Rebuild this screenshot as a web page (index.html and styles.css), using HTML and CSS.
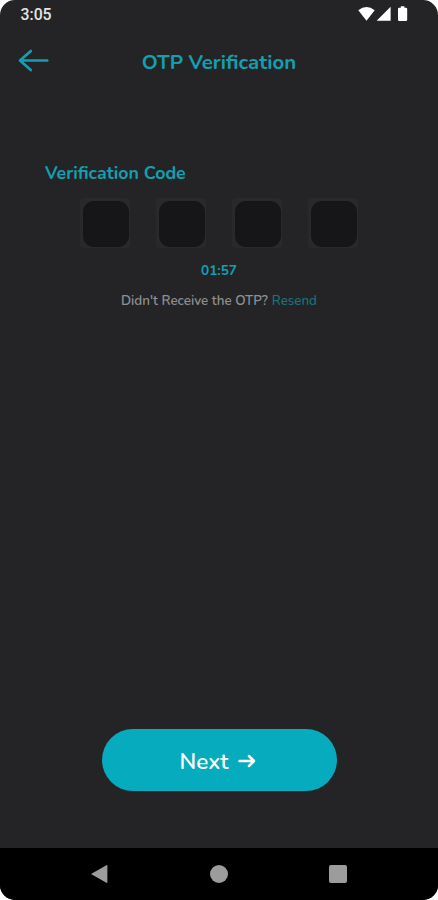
FILE: index.html
```html
<!DOCTYPE html>
<html lang="en">
<head>
    <meta charset="UTF-8">
    <meta name="viewport" content="width=device-width, initial-scale=1.0">
    <title>OTP Verification</title>
    <link rel="stylesheet" href="styles.css">
</head>
<body>
    <div class="screen">
        <div class="status-bar">
            <span class="time">3:05</span>
            <svg class="status-icons" width="52" height="18" viewBox="0 0 52 18" fill="#fff">
                <path d="M0.3 4.2 Q8.5 -2 16.7 4.2 L8.5 14.8 Z"/>
                <path d="M32.6 0.8 V14.8 H18.6 Z"/>
                <path d="M42.8 0.3 h3.6 v1.4 h1.6 q1.2 0 1.2 1.2 v10.9 q0 1.2 -1.2 1.2 h-6.8 q-1.2 0 -1.2 -1.2 v-10.9 q0 -1.2 1.2 -1.2 h1.6 z"/>
            </svg>
        </div>

        <div class="header">
            <button type="button" class="back-button" aria-label="Back">
                <svg width="32" height="24" viewBox="0 0 32 24" fill="none" stroke="#139fb0" stroke-width="2.7" stroke-linecap="round" stroke-linejoin="round">
                    <path d="M29.3 11.5 H2 M12.8 2 L2 11.5 L12.8 21"/>
                </svg>
            </button>
            <h1>OTP Verification</h1>
        </div>

        <form class="otp-form" onsubmit="event.preventDefault()">
            <h2>Verification Code</h2>
            <div class="code-container">
                <div class="code-box"><input type="text" maxlength="1" aria-label="Digit 1"></div>
                <div class="code-box"><input type="text" maxlength="1" aria-label="Digit 2"></div>
                <div class="code-box"><input type="text" maxlength="1" aria-label="Digit 3"></div>
                <div class="code-box"><input type="text" maxlength="1" aria-label="Digit 4"></div>
            </div>
            <div class="timer">01:57</div>
            <div class="resend-row">
                <span class="question">Didn't Receive the OTP?</span>
                <a class="resend">Resend</a>
            </div>
            <button type="submit" class="next-button">
                <span>Next</span>
                <svg width="18" height="14" viewBox="0 0 18 14" fill="none" stroke="#fff" stroke-width="2.5" stroke-linecap="round" stroke-linejoin="round">
                    <path d="M1.5 7 H15.5 M11 2 L16 7 L11 12"/>
                </svg>
            </button>
        </form>

        <div class="nav-bar">
            <svg width="18" height="20" viewBox="0 0 18 20" fill="#9c9c9c">
                <path d="M1 10 L16.4 1.2 Q17.4 0.8 17.4 1.8 V18.2 Q17.4 19.2 16.4 18.8 Z"/>
            </svg>
            <div class="nav-home"></div>
            <div class="nav-recent"></div>
        </div>
    </div>
</body>
</html>
```
FILE: styles.css
```css
body {
    font-family: 'Nunito', 'Lato', sans-serif;
    background-color: #fff;
    margin: 0;
}
.screen {
    display: flex;
    flex-direction: column;
    height: 900px;
    background-color: #242426;
    border-radius: 15px;
    overflow: hidden;
}
.status-bar {
    display: flex;
    justify-content: space-between;
    box-sizing: border-box;
    height: 30px;
    padding: 6px 28px 0 20.5px;
}
.time {
    font-family: 'Roboto', sans-serif;
    font-size: 15.8px;
    font-weight: 500;
    line-height: 18px;
    color: #e4e4e4;
}
.header {
    display: grid;
    grid-template-columns: 50px 1fr 50px;
    align-items: center;
    height: 62px;
}
.back-button {
    display: flex;
    background: none;
    border: none;
    padding: 0 0 0 18px;
    cursor: pointer;
}
h1 {
    margin: 2px 0 0;
    text-align: center;
    font-size: 20.4px;
    font-weight: 700;
    line-height: 24px;
    color: #139fb0;
}
.otp-form {
    display: flex;
    flex-direction: column;
    align-items: center;
    flex: 1;
    padding-top: 69px;
}
h2 {
    align-self: flex-start;
    margin: 0 0 0 45px;
    font-size: 17.8px;
    font-weight: 700;
    line-height: 24px;
    color: #139fb0;
}
.code-container {
    display: flex;
    gap: 26px;
    margin-top: 13px;
}
.code-box {
    width: 50px;
    height: 50px;
    padding: 3px 1px 1px 3px;
    box-sizing: border-box;
    background-color: #29292b;
    border-radius: 4px;
}
.code-box input {
    display: block;
    width: 46px;
    height: 46px;
    padding: 0;
    box-sizing: border-box;
    border: none;
    border-radius: 11px;
    outline: none;
    background-color: #161618;
    color: #fff;
    font-size: 20px;
    text-align: center;
}
.timer {
    margin-top: 13px;
    font-size: 13.6px;
    font-weight: 700;
    line-height: 20px;
    color: #139fb0;
}
.resend-row {
    display: flex;
    gap: 4px;
    margin-top: 10px;
    font-size: 13.4px;
    line-height: 20px;
}
.question {
    font-weight: 600;
    color: #8f8f91;
}
.resend {
    font-weight: 500;
    color: #18747e;
}
.next-button {
    display: flex;
    justify-content: center;
    align-items: center;
    gap: 10px;
    width: 235px;
    height: 62px;
    margin-top: auto;
    margin-bottom: 57px;
    padding: 2px 2px 0 0;
    box-sizing: border-box;
    border: none;
    border-radius: 31px;
    background-color: #06acbe;
    color: #fff;
    font-family: inherit;
    font-size: 22.5px;
    font-weight: 600;
    cursor: pointer;
}
.nav-bar {
    display: flex;
    justify-content: space-between;
    align-items: center;
    height: 52px;
    padding: 0 91px 0 90px;
    background-color: #000;
}
.nav-home {
    width: 18px;
    height: 18px;
    border-radius: 50%;
    background-color: #9c9c9c;
}
.nav-recent {
    width: 18px;
    height: 18px;
    border-radius: 2px;
    background-color: #9c9c9c;
}
```
